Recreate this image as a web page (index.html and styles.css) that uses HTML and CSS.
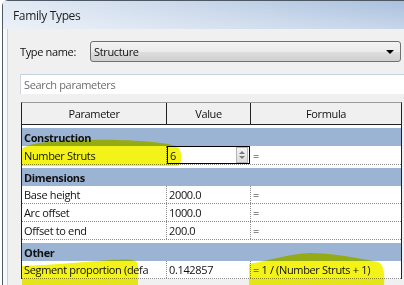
FILE: index.html
```html
<!DOCTYPE html>
<html lang="en">
<head>
    <meta charset="UTF-8">
    <title>Family Types</title>
    <link rel="stylesheet" href="styles.css">
</head>
<body>
    <div class="window">
        <div class="titlebar">Family Types</div>
        <div class="client">
            <div class="type-row">
                <span class="type-label">Type name:</span>
                <div class="combo">
                    <span>Structure</span>
                    <span class="combo-arrow"></span>
                </div>
            </div>

            <div class="search">Search parameters</div>

            <div class="grid">
                <div class="grid-head">
                    <div class="head-cell">Parameter</div>
                    <div class="head-cell">Value</div>
                    <div class="head-cell">Formula</div>
                </div>

                <div class="group">Construction</div>
                <div class="row row-active">
                    <div class="cell">Number Struts</div>
                    <div class="cell cell-edit">
                        <span>6</span>
                        <span class="spin">
                            <span class="spin-up"></span>
                            <span class="spin-down"></span>
                        </span>
                    </div>
                    <div class="cell cell-focus">=</div>
                </div>

                <div class="group">Dimensions</div>
                <div class="row">
                    <div class="cell">Base height</div>
                    <div class="cell">2000.0</div>
                    <div class="cell">=</div>
                </div>
                <div class="row">
                    <div class="cell">Arc offset</div>
                    <div class="cell">1000.0</div>
                    <div class="cell">=</div>
                </div>
                <div class="row">
                    <div class="cell">Offset to end</div>
                    <div class="cell">200.0</div>
                    <div class="cell">=</div>
                </div>

                <div class="group">Other</div>
                <div class="row">
                    <div class="cell">Segment proportion (defa</div>
                    <div class="cell">0.142857</div>
                    <div class="cell">= 1 / (Number Struts + 1)</div>
                </div>
            </div>
        </div>
    </div>

    <!-- highlighter marks drawn over the screenshot -->
    <svg class="marker" width="404" height="285" viewBox="0 0 404 285">
        <path d="M22 166 L22 149 C26 144 45 141 80 140 C120 139 160 141 176 146 C183 150 183 162 178 166 Z"/>
        <path d="M22 285 L22 266 C50 265 80 262 110 260 C125 259 134 259 137 262 C139 268 138 278 138 285 Z"/>
        <path d="M249 285 L249 264 C270 260 290 254 310 253 C330 253 360 258 378 262 C384 264 385 275 384 285 Z"/>
    </svg>
</body>
</html>
```

FILE: styles.css
```css
:root {
    --face: #f0f0f0;
    --group: #9cb4d4;
    --line: #222;
    --dots: #8c8c8c;
}

body {
    margin: 0;
    width: 404px;
    height: 285px;
    overflow: hidden;
    background: #fff;
    font-family: 'Open Sans', 'Noto Sans', sans-serif;
    font-size: 11px;
    letter-spacing: -0.35px;
    color: #111;
    position: relative;
}

.window {
    margin-left: 2px;
    height: 100%;
    border-left: 1px solid #4e5864;
    border-top: 1px solid #4e5864;
    border-top-left-radius: 6px;
    display: flex;
    flex-direction: column;
}

.titlebar {
    flex: none;
    height: 28px;
    padding-left: 10px;
    display: flex;
    align-items: center;
    font-size: 12px;
    color: #1e1e1e;
    background:
        linear-gradient(to bottom, rgba(255,255,255,0) 0%, rgba(255,255,255,0.35) 100%),
        linear-gradient(to right, #e2eaf4 0%, #ccdaec 40%, #a9c0dd 100%);
}

.client {
    flex: 1;
    min-height: 0;
    overflow: hidden;
    background: var(--face);
    border-left: 4px solid #f7f8fa;
    box-shadow: inset 1px 0 0 #c9ced6;
    padding: 12px 0 0 13px;
}

/* type selector */

.type-row {
    display: flex;
    align-items: center;
    gap: 13px;
    height: 21px;
}

.type-label {
    flex: none;
    width: 57px;
    white-space: nowrap;
}

.combo {
    flex: 1;
    height: 19px;
    margin-right: 3px;
    border: 1px solid #707070;
    border-radius: 3px;
    background: linear-gradient(to bottom, #f3f3f3 0%, #ebebeb 50%, #dedede 51%, #d0d0d0 100%);
    display: flex;
    align-items: center;
    justify-content: space-between;
    padding: 0 6px 0 3px;
}

.combo-arrow {
    width: 0;
    height: 0;
    border-left: 4px solid transparent;
    border-right: 4px solid transparent;
    border-top: 4px solid #000;
}

/* search field */

.search {
    margin-top: 12px;
    height: 19px;
    background: #fff;
    border-top: 1px solid #c3d2e3;
    border-left: 1px solid #d2d6dc;
    padding-left: 3px;
    display: flex;
    align-items: center;
    color: #6d6d6d;
}

/* parameter grid */

.grid {
    margin: 8px 0 0 1px;
    width: 379px;
    border-left: 1px solid var(--line);
    border-right: 1px solid var(--line);
    border-top: 1px solid #9a9a9a;
    background: #fff;
}

.grid-head {
    display: grid;
    grid-template-columns: 145px 84px 1fr;
    height: 21px;
    background: var(--face);
    border-bottom: 1px solid var(--line);
    margin-bottom: 3px;
}

.head-cell {
    display: flex;
    align-items: center;
    justify-content: center;
    border-right: 1px solid var(--line);
}

.head-cell:last-child {
    border-right: none;
}

.group {
    height: 18px;
    background: var(--group);
    font-weight: bold;
    padding-left: 2px;
    display: flex;
    align-items: center;
}

.row {
    display: grid;
    grid-template-columns: 145px 84px 1fr;
    height: 17px;
    border-bottom: 1px dotted var(--dots);
}

.row + .group {
    margin-top: 3px;
}

.row-active {
    height: 18px;
}

.cell {
    display: flex;
    align-items: center;
    padding-left: 2px;
    white-space: nowrap;
    overflow: hidden;
    border-right: 1px dotted var(--dots);
}

.cell:last-child {
    border-right: none;
}

.cell-edit {
    border: 1px solid #000;
    margin-right: 1px;
    justify-content: space-between;
    padding-right: 1px;
}

.cell-focus {
    border-right: 1px dotted #555;
}

.spin {
    width: 10px;
    height: 14px;
    border: 1px solid #b5b5b5;
    background: linear-gradient(to bottom, #f4f4f4, #dcdcdc);
    display: flex;
    flex-direction: column;
    align-items: center;
    justify-content: center;
    gap: 2px;
}

.spin-up, .spin-down {
    width: 0;
    height: 0;
    border-left: 3px solid transparent;
    border-right: 3px solid transparent;
}

.spin-up { border-bottom: 3px solid #7a7a7a; }
.spin-down { border-top: 3px solid #7a7a7a; }

.marker {
    position: absolute;
    left: 0;
    top: 0;
    pointer-events: none;
    mix-blend-mode: multiply;
}

.marker path {
    fill: #f2f200;
    opacity: 0.9;
}
```
